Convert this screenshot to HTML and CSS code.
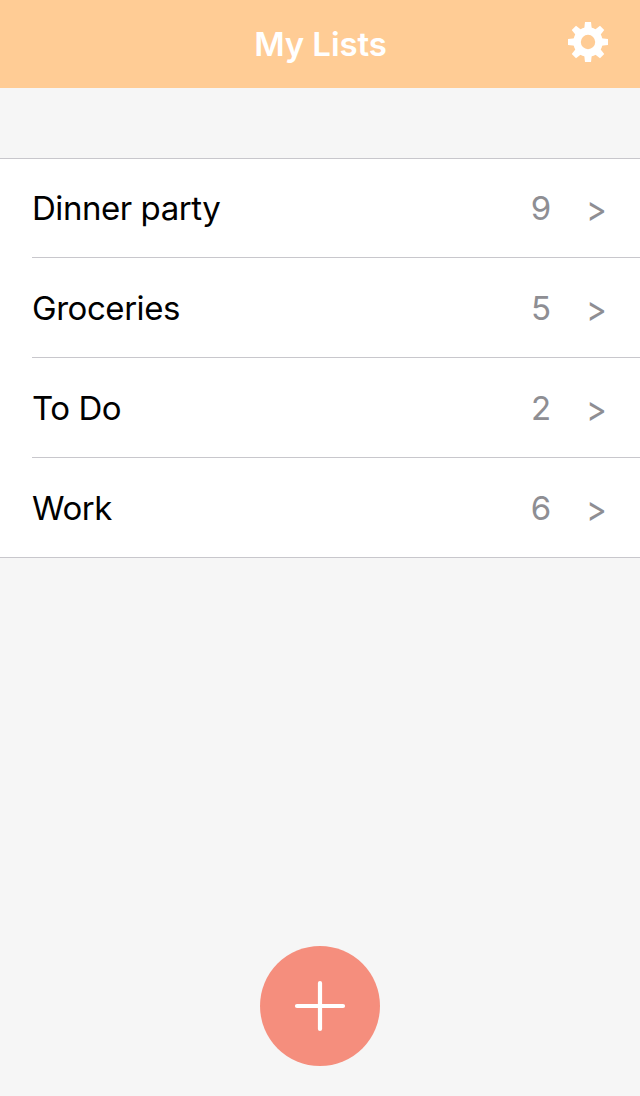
FILE: index.html
```html
<!DOCTYPE html>
<html lang="en">
<head>
    <meta charset="UTF-8" />
    <meta name="viewport" content="width=device-width, initial-scale=1.0" />
    <title>My Lists</title>
    <link rel="stylesheet" href="styles.css">
</head>
<body>
    <header class="navbar">
        <h1 class="title">My Lists</h1>
        <button type="button" class="settings" aria-label="Settings">
            <svg width="40" height="40" viewBox="-20 -20 40 40">
                <g fill="#fff">
                    <path d="M-3-20H3L3.8-13V13L3 20H-3L-3.8 13V-13z" />
                    <path d="M-3-20H3L3.8-13V13L3 20H-3L-3.8 13V-13z" transform="rotate(45)" />
                    <path d="M-3-20H3L3.8-13V13L3 20H-3L-3.8 13V-13z" transform="rotate(90)" />
                    <path d="M-3-20H3L3.8-13V13L3 20H-3L-3.8 13V-13z" transform="rotate(135)" />
                    <circle r="14.7" />
                </g>
                <circle r="7.2" fill="#ffcc95" />
            </svg>
        </button>
    </header>
    <main class="content">
        <ul class="lists">
            <li class="list-item"><span class="name">Dinner party</span><span class="count">9</span><span class="arrow">&gt;</span></li>
            <li class="list-item"><span class="name">Groceries</span><span class="count">5</span><span class="arrow">&gt;</span></li>
            <li class="list-item"><span class="name">To Do</span><span class="count">2</span><span class="arrow">&gt;</span></li>
            <li class="list-item"><span class="name">Work</span><span class="count">6</span><span class="arrow">&gt;</span></li>
        </ul>
        <button type="button" class="add" aria-label="Add list">
            <svg width="52" height="52" viewBox="0 0 52 52">
                <path d="M26 3v46M3 26h46" stroke="#fff" stroke-width="4.2" stroke-linecap="round" />
            </svg>
        </button>
    </main>
</body>
</html>
```

FILE: styles.css
```css
* {
    margin: 0;
    padding: 0;
    box-sizing: border-box;
    font-family: Inter, sans-serif;
}

body {
    background-color: #f6f6f6;
    height: 100vh;
    display: flex;
    flex-direction: column;
}

button {
    border: none;
    background: none;
    cursor: pointer;
}

.navbar {
    height: 88px;
    padding: 0 32px;
    background-color: #ffcc95;
    display: grid;
    grid-template-columns: 40px 1fr 40px;
    align-items: center;
}

.title {
    grid-column: 2;
    padding-left: 1px;
    color: #fff;
    font-size: 33px;
    font-weight: 600;
    letter-spacing: -0.1px;
    text-align: center;
}

.settings {
    height: 40px;
    margin-bottom: 4px;
}

.settings svg,
.add svg {
    display: block;
}

.content {
    flex: 1;
    display: flex;
    flex-direction: column;
    justify-content: space-between;
    padding: 70px 0 30px;
}

.lists {
    list-style: none;
    padding-left: 32px;
    background-color: #fff;
    border-top: 1px solid #c8c7cc;
    border-bottom: 1px solid #c8c7cc;
}

.list-item {
    height: 100px;
    padding-right: 34px;
    display: flex;
    align-items: center;
    font-size: 33px;
    border-bottom: 1px solid #c8c7cc;
}

.list-item:last-child {
    height: 99px;
    border-bottom: none;
}

.list-item:first-child {
    height: 99px;
}

.name {
    flex: 1;
    letter-spacing: -0.45px;
}

.count,
.arrow {
    color: #8e8e93;
}

.count {
    margin-right: 35px;
}

.arrow {
    font-size: 30px;
    transform: translate(0.5px, 1px) scale(1.03, 1.2);
}

.add {
    width: 120px;
    height: 120px;
    align-self: center;
    border-radius: 50%;
    background-color: #f58e7d;
    display: flex;
    justify-content: center;
    align-items: center;
}
```
